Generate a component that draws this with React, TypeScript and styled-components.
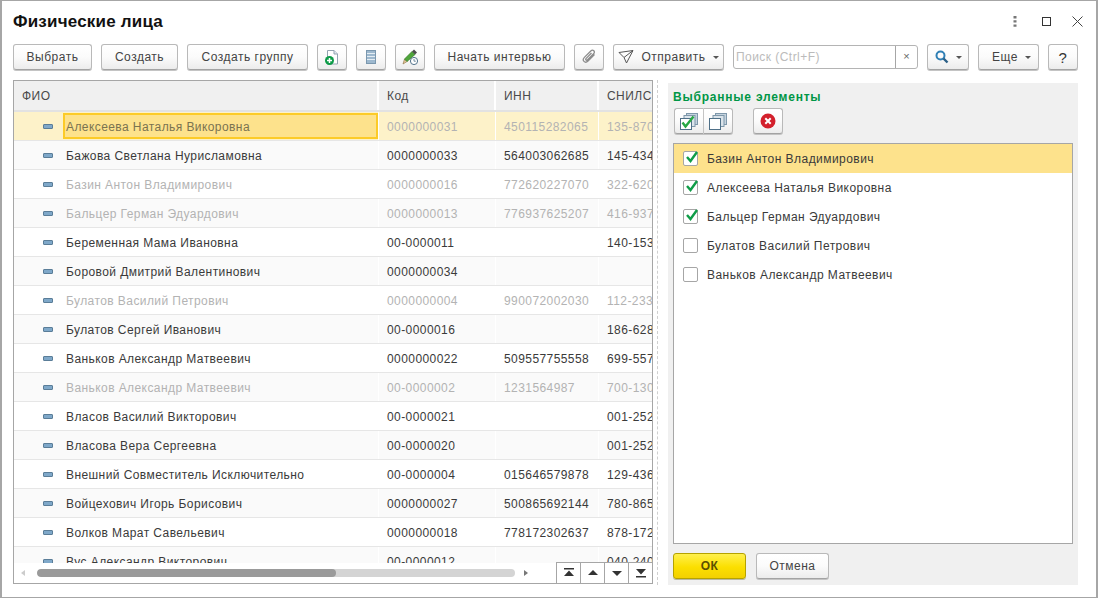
import React from 'react';
import styled, { createGlobalStyle } from 'styled-components';

const people: [string, string, string, string, boolean?][] = [
  ['Алексеева Наталья Викоровна', '0000000031', '450115282065', '135-870', true],
  ['Бажова Светлана Нурисламовна', '0000000033', '564003062685', '145-434'],
  ['Базин Антон Владимирович', '0000000016', '772620227070', '322-620', true],
  ['Бальцер Герман Эдуардович', '0000000013', '776937625207', '416-937', true],
  ['Беременная Мама Ивановна', '00-0000011', '', '140-153'],
  ['Боровой Дмитрий Валентинович', '0000000034', '', ''],
  ['Булатов Василий Петрович', '0000000004', '990072002030', '112-233', true],
  ['Булатов Сергей Иванович', '00-0000016', '', '186-628'],
  ['Ваньков Александр Матвеевич', '0000000022', '509557755558', '699-557'],
  ['Ваньков Александр Матвеевич', '00-0000002', '1231564987', '700-130', true],
  ['Власов Василий Викторович', '00-0000021', '', '001-252'],
  ['Власова Вера Сергеевна', '00-0000020', '', '001-252'],
  ['Внешний Совместитель Исключительно', '00-0000004', '015646579878', '129-436'],
  ['Войцехович Игорь Борисович', '0000000027', '500865692144', '780-865'],
  ['Волков Марат Савельевич', '0000000018', '778172302637', '878-172'],
  ['Вус Александр Викторович', '00-0000012', '', '040-240'],
];

const chosen: [string, boolean][] = [
  ['Базин Антон Владимирович', true],
  ['Алексеева Наталья Викоровна', true],
  ['Бальцер Герман Эдуардович', true],
  ['Булатов Василий Петрович', false],
  ['Ваньков Александр Матвеевич', false],
];

const GlobalStyle = createGlobalStyle`
  html, body {
    margin: 0;
    padding: 0;
    background: #fff;
  }
  * {
    box-sizing: border-box;
  }
`;

const Window = styled.div`
  width: 1098px;
  height: 598px;
  border: 1px solid #a6a6a6;
  border-left-width: 2px;
  border-right-width: 2px;
  background: #fff;
  font-family: 'Liberation Sans', Arial, sans-serif;
  font-size: 12px;
  color: #333;
  display: flex;
  flex-direction: column;
  padding: 0 18px 12px 11px;
  overflow: hidden;
`;

const TitleBar = styled.div`
  height: 43px;
  display: flex;
  align-items: center;
  justify-content: space-between;
  margin-right: -5px;
  padding-bottom: 2px;
`;

const Title = styled.div`
  font-size: 17px;
  font-weight: 700;
  color: #111;
  letter-spacing: 0.2px;
`;

const WindowControls = styled.div`
  display: flex;
  align-items: center;
  gap: 21px;
`;

const MenuDots = styled.svg`
  margin-right: 4px;
`;

const Toolbar = styled.div`
  height: 26px;
  display: flex;
  gap: 9px;
`;

const Button = styled.button<{ $w: number }>`
  width: ${(p) => p.$w}px;
  height: 26px;
  flex: none;
  padding: 0;
  border: 1px solid #b9b9b9;
  border-bottom-color: #a3a3a3;
  border-radius: 3px;
  background: linear-gradient(#ffffff 0%, #fbfbfb 50%, #ececec 100%);
  box-shadow: 0 1px 0 #c4c4c4;
  font: inherit;
  letter-spacing: 0.5px;
  color: #444;
  display: flex;
  align-items: center;
  justify-content: center;
  gap: 7px;
`;

const MoreButton = styled(Button)`
  padding-left: 6px;
`;

const HelpButton = styled(Button)`
  font-size: 15px;
  color: #333;
`;

const Caret = styled.span`
  width: 0;
  height: 0;
  border-left: 3px solid transparent;
  border-right: 3px solid transparent;
  border-top: 3px solid #555;
  margin-top: 1px;
`;

const SearchBox = styled.div`
  width: 185px;
  height: 24px;
  margin-top: 1px;
  flex: none;
  display: flex;
  border: 1px solid #b4b4b4;
  border-radius: 3px;
  background: #fff;
`;

const SearchInput = styled.div`
  flex: 1;
  border-right: 1px solid #a6a6a6;
  padding: 4px 2px;
  color: #bbb;
  letter-spacing: 0.45px;
`;

const SearchClear = styled.div`
  width: 21px;
  display: flex;
  align-items: center;
  justify-content: center;
  color: #666;
  font-size: 11px;
  padding-bottom: 3px;
`;

const Main = styled.div`
  flex: 1;
  min-height: 0;
  margin-top: 10px;
  display: flex;
`;

const TablePane = styled.div`
  width: 640px;
  height: 504px;
  flex: none;
  position: relative;
  overflow: hidden;
  border: 1px solid #a6a6a6;
`;

const TableRow = styled.div<{ $alt?: boolean; $current?: boolean }>`
  display: grid;
  grid-template-columns: 365px 117px 103px 1fr;
  height: 29px;
  border-bottom: 1px solid #e6e6e6;
  background: ${(p) => (p.$current ? '#fdf2c9' : p.$alt ? '#fafafa' : '#fff')};
`;

const HeaderRow = styled.div`
  display: grid;
  grid-template-columns: 365px 117px 103px 1fr;
  height: 31px;
  background: #f0f0f0;
  border-bottom: 2px solid #e2e2e2;
  color: #4a4a4a;
  letter-spacing: 0.45px;
`;

const HeaderCell = styled.div`
  padding: 8px 8px 0;
  white-space: nowrap;
  overflow: hidden;
  border-right: 2px solid #fff;

  &:last-child {
    border-right: 0;
  }
`;

const Cell = styled.div<{ $muted?: boolean }>`
  padding: 8px 7px 0 8px;
  white-space: nowrap;
  overflow: hidden;
  letter-spacing: 0.42px;
  color: ${(p) => (p.$muted ? '#b3b3b3' : '#3a3a3a')};
  border-right: 1px solid #fff;

  &:last-child {
    border-right: 0;
  }
`;

const NameCell = styled(Cell)`
  display: flex;
  padding: 0;
  align-items: center;
`;

const RowMark = styled.span`
  width: 10px;
  height: 5px;
  flex: none;
  margin-left: 29px;
  background: #7fa8c9;
  border: 1px solid #5a7d98;
  border-radius: 1px;
`;

const NameText = styled.span<{ $focus?: boolean }>`
  flex: 1;
  align-self: stretch;
  margin: ${(p) => (p.$focus ? '1px 0 1px 10px' : '0 0 0 13px')};
  padding: ${(p) => (p.$focus ? '1px 0 0 1px' : '2px 0 0')};
  display: flex;
  align-items: center;
  background: ${(p) => (p.$focus ? '#fde28c' : 'transparent')};
  border: ${(p) => (p.$focus ? '2px solid #fccb28' : '0')};
  color: ${(p) => (p.$focus ? '#7a7350' : 'inherit')};
`;

const ScrollBar = styled.div`
  position: absolute;
  left: 0;
  right: 0;
  bottom: 0;
  height: 20px;
  background: #fff;
  display: flex;
  align-items: center;
  padding-left: 7px;
`;

const ScrollArrow = styled.span<{ $right?: boolean; $dark?: boolean }>`
  width: 0;
  height: 0;
  flex: none;
  border-top: 3px solid transparent;
  border-bottom: 3px solid transparent;
  ${(p) =>
    p.$right
      ? `border-left: 4px solid ${p.$dark ? '#777' : '#ccc'};`
      : `border-right: 4px solid ${p.$dark ? '#777' : '#ccc'};`}
`;

const ScrollTrack = styled.div`
  width: 478px;
  height: 8px;
  margin: 0 9px 0 12px;
  border-radius: 4px;
  background: #d4d4d4;
  overflow: hidden;
`;

const ScrollThumb = styled.div`
  width: 299px;
  height: 8px;
  border-radius: 4px;
  background: #9a9a9a;
`;

const PageButtons = styled.div`
  position: absolute;
  right: 0;
  bottom: 0;
  display: flex;
  background: #fff;
  border-top: 1px solid #a6a6a6;
  border-left: 1px solid #a6a6a6;
`;

const PageButton = styled.div`
  width: 24px;
  height: 20px;
  display: flex;
  align-items: center;
  justify-content: center;
  border-right: 1px solid #a6a6a6;

  &:last-child {
    width: 23px;
    border-right: 0;
  }
`;

const Divider = styled.div`
  width: 1px;
  margin: 0 10px 0 4px;
  flex: none;
  border-left: 1px dashed #cfcfcf;
`;

const SidePanel = styled.div`
  width: 410px;
  height: 502px;
  margin-top: 3px;
  background: #f0f0f0;
  padding: 7px 5px 0;
  display: flex;
  flex-direction: column;
`;

const SideTitle = styled.div`
  color: #009646;
  font-weight: 700;
  font-size: 12px;
  letter-spacing: 0.78px;
  height: 18px;
`;

const SideTools = styled.div`
  height: 26px;
  display: flex;
  gap: 20px;
  padding-left: 1px;
`;

const ButtonGroup = styled.div`
  display: flex;

  & > button:first-child {
    border-radius: 3px 0 0 3px;
    border-right-color: #c4c4c4;
  }
  & > button:last-child {
    border-radius: 0 3px 3px 0;
    border-left: 0;
  }
`;

const CheckList = styled.div`
  height: 401px;
  margin-top: 9px;
  background: #fff;
  border: 1px solid #a6a6a6;
`;

const CheckRow = styled.div<{ $current?: boolean }>`
  height: 29px;
  display: flex;
  align-items: center;
  padding-left: 9px;
  gap: 9px;
  letter-spacing: 0.45px;
  color: #3a3a3a;
  background: ${(p) => (p.$current ? '#fde28c' : 'transparent')};
`;

const CheckBox = styled.span`
  width: 15px;
  height: 15px;
  flex: none;
  border: 1px solid #a6a6a6;
  border-radius: 2px;
  background: #fff;
  position: relative;
`;

const CheckMark = styled.svg`
  position: absolute;
  left: 0;
  top: -3px;
`;

const Footer = styled.div`
  display: flex;
  gap: 10px;
  margin-top: 9px;
`;

const OkButton = styled(Button)`
  background: linear-gradient(#fff04d 0%, #fbdf00 55%, #f2d000 100%);
  border-color: #b5a200;
  color: #5a4f00;
  font-weight: 700;
  box-shadow: 0 1px 0 #b9b9a0;
`;

const AddDocIcon = () => (
  <svg width="16" height="16" viewBox="0 0 16 16">
    <path d="M3.5 1.5h6.5l3.5 3.5v10h-10z" fill="#fff" stroke="#93a3b1" />
    <path d="M10 1.5v3.5h3.5" fill="#dfe7ee" stroke="#93a3b1" />
    <circle cx="5.5" cy="11.5" r="4.5" fill="#0d9b48" />
    <path d="M5.5 9v5M3 11.5h5" stroke="#fff" strokeWidth="1.5" />
  </svg>
);

const ListIcon = () => (
  <svg width="10" height="14" viewBox="0 0 10 14">
    <rect x="0.5" y="0.5" width="9" height="13" fill="#9db8ce" stroke="#7a97ae" />
    <path d="M1 3.5h8M1 6.5h8M1 9.5h8" stroke="#e4edf3" />
  </svg>
);

const PenClockIcon = () => (
  <svg width="16" height="16" viewBox="0 0 16 16">
    <path d="M1 15l1.5-5L5 12.5z" fill="#e5c79a" stroke="#8a6d3f" strokeWidth="0.6" />
    <path d="M2.5 10L10 2.5l3 3L5 12.5z" fill="#4fa53a" stroke="#2f7a22" strokeWidth="0.7" />
    <path d="M10 2.5L12 .5l3 3-2 2z" fill="#4d4d4d" />
    <circle cx="12" cy="12" r="3.6" fill="#fff" stroke="#54748c" />
    <path d="M12 10v2.2h1.8" fill="none" stroke="#54748c" strokeWidth="0.8" />
  </svg>
);

const ClipIcon = () => (
  <svg width="16" height="16" viewBox="0 0 16 16" fill="none" stroke="#8c8c8c" strokeWidth="1.3">
    <path d="M13.5 5.5L7 12c-1.3 1.3-3 1.4-4 .4s-.9-2.7.4-4L9.8 2c1-1 2.2-1 3-.2s.8 2 -.2 3L6.6 10.8c-.5.5-1.2.6-1.6.2s-.3-1.1.2-1.6L10.5 4" />
  </svg>
);

const PlaneIcon = () => (
  <svg width="16" height="14" viewBox="0 0 16 14" fill="none" stroke="#555">
    <path d="M1 2.5l14-2-6.5 12.5-2.5-5.5zM6 7.5L15 .5" />
  </svg>
);

const SearchIcon = () => (
  <svg width="14" height="14" viewBox="0 0 14 14" fill="none">
    <circle cx="5.5" cy="5.5" r="4" stroke="#2f7fb5" strokeWidth="2" />
    <path d="M8.5 8.5l4 4" stroke="#2b5f86" strokeWidth="2.4" />
  </svg>
);

const CheckAllIcon = () => (
  <svg width="18" height="17" viewBox="0 0 18 17">
    <rect x="6.5" y="0.5" width="11" height="11" fill="#c5d3de" stroke="#7f98ab" />
    <rect x="4" y="2.5" width="11" height="11" fill="#dbe4eb" stroke="#7f98ab" />
    <rect x="0.5" y="5.5" width="11" height="11" fill="#fff" stroke="#4f7088" />
    <path d="M2.5 9.5l3 4 8-10" fill="none" stroke="#27a844" strokeWidth="2.4" />
  </svg>
);

const UncheckAllIcon = () => (
  <svg width="18" height="17" viewBox="0 0 18 17">
    <rect x="6.5" y="0.5" width="11" height="11" fill="#c5d3de" stroke="#7f98ab" />
    <rect x="4" y="2.5" width="11" height="11" fill="#dbe4eb" stroke="#7f98ab" />
    <rect x="0.5" y="5.5" width="11" height="11" fill="#fff" stroke="#4f7088" />
  </svg>
);

const DeleteIcon = () => (
  <svg width="16" height="16" viewBox="0 0 16 16">
    <circle cx="8" cy="8" r="7.5" fill="#d3202c" />
    <path d="M5.3 5.3l5.4 5.4M10.7 5.3l-5.4 5.4" stroke="#fff" strokeWidth="2" />
  </svg>
);

const PageIcon = ({ d }: { d: string }) => (
  <svg width="12" height="10" viewBox="0 0 12 10">
    <path d={d} fill="#333" />
  </svg>
);

export default function App() {
  return (
    <>
      <GlobalStyle />
      <Window>
        <TitleBar>
          <Title>Физические лица</Title>
          <WindowControls>
            <MenuDots width="4" height="11" viewBox="0 0 4 11">
              <path d="M2 0v2.4M2 4.2v2.4M2 8.4v2.4" stroke="#777" strokeWidth="3" />
            </MenuDots>
            <svg width="9" height="9" viewBox="0 0 9 9">
              <rect x="0.5" y="0.5" width="8" height="8" fill="none" stroke="#333" />
            </svg>
            <svg width="11" height="11" viewBox="0 0 11 11">
              <path d="M0.5 0.5l10 10M10.5 0.5l-10 10" stroke="#444" />
            </svg>
          </WindowControls>
        </TitleBar>
        <Toolbar>
          <Button $w={79}>Выбрать</Button>
          <Button $w={77}>Создать</Button>
          <Button $w={121}>Создать группу</Button>
          <Button $w={30}><AddDocIcon /></Button>
          <Button $w={30}><ListIcon /></Button>
          <Button $w={30}><PenClockIcon /></Button>
          <Button $w={131}>Начать интервью</Button>
          <Button $w={30}><ClipIcon /></Button>
          <Button $w={111}><PlaneIcon />Отправить<Caret /></Button>
          <SearchBox>
            <SearchInput>Поиск (Ctrl+F)</SearchInput>
            <SearchClear>×</SearchClear>
          </SearchBox>
          <Button $w={42}><SearchIcon /><Caret /></Button>
          <MoreButton $w={61}>Еще<Caret /></MoreButton>
          <HelpButton $w={30}>?</HelpButton>
        </Toolbar>
        <Main>
          <TablePane>
            <HeaderRow>
              <HeaderCell>ФИО</HeaderCell>
              <HeaderCell>Код</HeaderCell>
              <HeaderCell>ИНН</HeaderCell>
              <HeaderCell>СНИЛС</HeaderCell>
            </HeaderRow>
            {people.map(([name, code, inn, snils, muted], i) => (
              <TableRow key={code} $alt={i % 2 === 1} $current={i === 0}>
                <NameCell $muted={muted}>
                  <RowMark />
                  <NameText $focus={i === 0}>{name}</NameText>
                </NameCell>
                <Cell $muted={muted}>{code}</Cell>
                <Cell $muted={muted}>{inn}</Cell>
                <Cell $muted={muted}>{snils}</Cell>
              </TableRow>
            ))}
            <ScrollBar>
              <ScrollArrow />
              <ScrollTrack>
                <ScrollThumb />
              </ScrollTrack>
              <ScrollArrow $right $dark />
            </ScrollBar>
            <PageButtons>
              <PageButton><PageIcon d="M1 0h10v1.5H1zM6 2.5l5 5.5H1z" /></PageButton>
              <PageButton><PageIcon d="M6 2l5 5H1z" /></PageButton>
              <PageButton><PageIcon d="M1 3h10L6 8z" /></PageButton>
              <PageButton><PageIcon d="M1 1h10L6 6.5zM1 8h10v1.5H1z" /></PageButton>
            </PageButtons>
          </TablePane>
          <Divider />
          <SidePanel>
            <SideTitle>Выбранные элементы</SideTitle>
            <SideTools>
              <ButtonGroup>
                <Button $w={30}><CheckAllIcon /></Button>
                <Button $w={29}><UncheckAllIcon /></Button>
              </ButtonGroup>
              <Button $w={30}><DeleteIcon /></Button>
            </SideTools>
            <CheckList>
              {chosen.map(([name, on], i) => (
                <CheckRow key={name} $current={i === 0}>
                  <CheckBox>
                    {on && (
                      <CheckMark width="16" height="16" viewBox="0 0 16 16">
                        <path d="M3 8l3.5 4L13 3" fill="none" stroke="#0f9d48" strokeWidth="2.4" />
                      </CheckMark>
                    )}
                  </CheckBox>
                  {name}
                </CheckRow>
              ))}
            </CheckList>
            <Footer>
              <OkButton $w={73}>ОК</OkButton>
              <Button $w={73}>Отмена</Button>
            </Footer>
          </SidePanel>
        </Main>
      </Window>
    </>
  );
}
